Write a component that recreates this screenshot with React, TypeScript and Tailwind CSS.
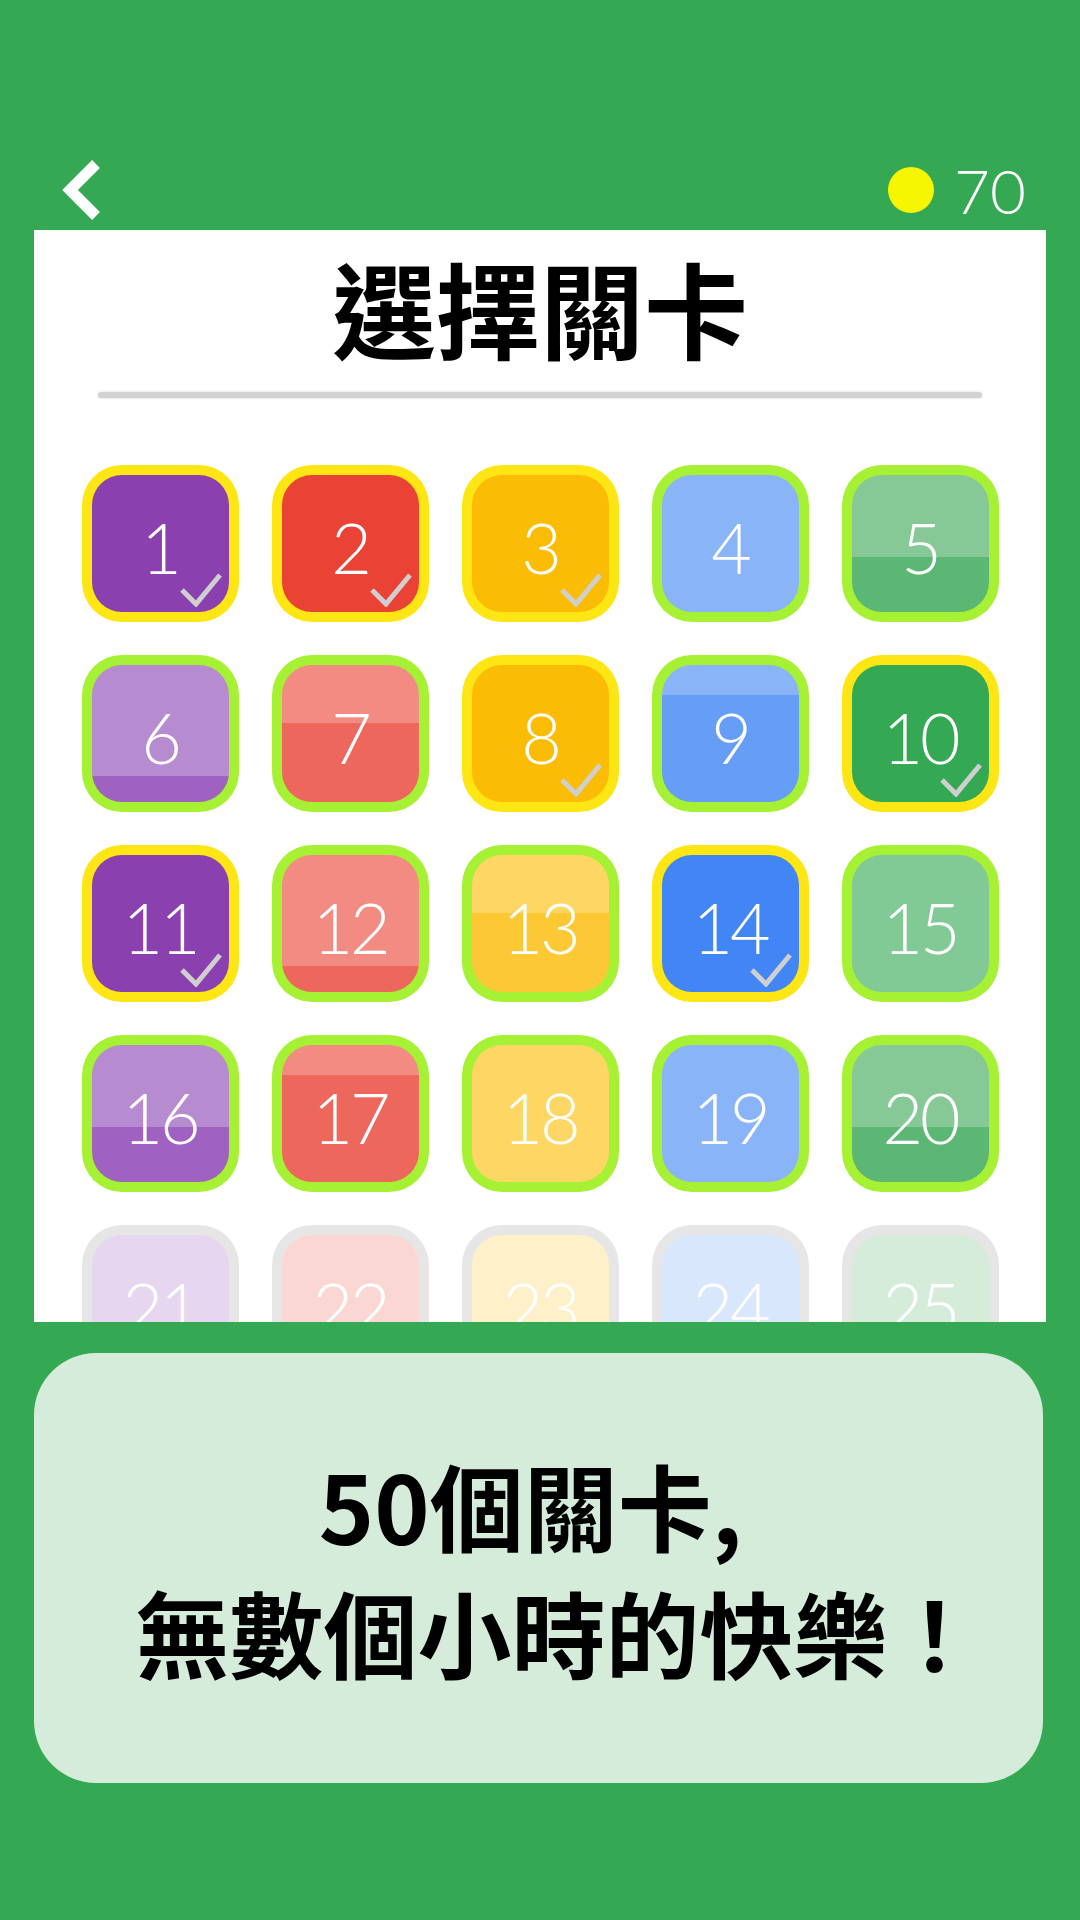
import React from "react";

type Tile = {
  n: number;
  ring: string;
  top: string;
  bottom: string;
  split: string;
  done?: boolean;
};

const YELLOW = "bg-[#fde614]";
const LIME = "bg-[#a6f134]";

const TILES: Tile[] = [
  { n: 1, ring: YELLOW, top: "bg-[#8b40b0]", bottom: "bg-[#8b40b0]", split: "h-[50%]", done: true },
  { n: 2, ring: YELLOW, top: "bg-[#ea4335]", bottom: "bg-[#ea4335]", split: "h-[50%]", done: true },
  { n: 3, ring: YELLOW, top: "bg-[#fbbc05]", bottom: "bg-[#fbbc05]", split: "h-[50%]", done: true },
  { n: 4, ring: LIME, top: "bg-[#8ab4f8]", bottom: "bg-[#8ab4f8]", split: "h-[50%]" },
  { n: 5, ring: LIME, top: "bg-[#86c997]", bottom: "bg-[#5cb774]", split: "h-[60%]" },
  { n: 6, ring: LIME, top: "bg-[#b78bd0]", bottom: "bg-[#9f62c0]", split: "h-[81%]" },
  { n: 7, ring: LIME, top: "bg-[#f28b82]", bottom: "bg-[#ee675c]", split: "h-[42%]" },
  { n: 8, ring: YELLOW, top: "bg-[#fbbc05]", bottom: "bg-[#fbbc05]", split: "h-[50%]", done: true },
  { n: 9, ring: LIME, top: "bg-[#8ab4f8]", bottom: "bg-[#669df6]", split: "h-[22%]" },
  { n: 10, ring: YELLOW, top: "bg-[#34a853]", bottom: "bg-[#34a853]", split: "h-[50%]", done: true },
  { n: 11, ring: YELLOW, top: "bg-[#8b40b0]", bottom: "bg-[#8b40b0]", split: "h-[50%]", done: true },
  { n: 12, ring: LIME, top: "bg-[#f28b82]", bottom: "bg-[#ee675c]", split: "h-[81%]" },
  { n: 13, ring: LIME, top: "bg-[#fdd663]", bottom: "bg-[#fcc934]", split: "h-[42%]" },
  { n: 14, ring: YELLOW, top: "bg-[#4285f4]", bottom: "bg-[#4285f4]", split: "h-[50%]", done: true },
  { n: 15, ring: LIME, top: "bg-[#81c995]", bottom: "bg-[#81c995]", split: "h-[50%]" },
  { n: 16, ring: LIME, top: "bg-[#b78bd0]", bottom: "bg-[#9f62c0]", split: "h-[60%]" },
  { n: 17, ring: LIME, top: "bg-[#f28b82]", bottom: "bg-[#ee675c]", split: "h-[22%]" },
  { n: 18, ring: LIME, top: "bg-[#fdd663]", bottom: "bg-[#fdd663]", split: "h-[50%]" },
  { n: 19, ring: LIME, top: "bg-[#8ab4f8]", bottom: "bg-[#8ab4f8]", split: "h-[50%]" },
  { n: 20, ring: LIME, top: "bg-[#86c997]", bottom: "bg-[#5cb774]", split: "h-[60%]" },
  { n: 21, ring: "bg-[#e6e6e6]", top: "bg-[#e6d6ef]", bottom: "bg-[#e6d6ef]", split: "h-[50%]" },
  { n: 22, ring: "bg-[#e6e6e6]", top: "bg-[#fbd7d4]", bottom: "bg-[#fbd7d4]", split: "h-[50%]" },
  { n: 23, ring: "bg-[#e6e6e6]", top: "bg-[#fef0c9]", bottom: "bg-[#fef0c9]", split: "h-[50%]" },
  { n: 24, ring: "bg-[#e6e6e6]", top: "bg-[#d9e7fd]", bottom: "bg-[#d9e7fd]", split: "h-[50%]" },
  { n: 25, ring: "bg-[#e6e6e6]", top: "bg-[#d6ecda]", bottom: "bg-[#d6ecda]", split: "h-[50%]" },
];

function Check() {
  return (
    <svg
      className="absolute right-[6px] bottom-[5px]"
      width="44"
      height="36"
      viewBox="0 0 44 36"
      fill="none"
    >
      <polyline points="3,19 17,33 41,4" stroke="#cfcfcf" strokeWidth="5" />
    </svg>
  );
}

function LevelTile({ tile }: { tile: Tile }) {
  return (
    <div className={`w-[157px] h-[157px] rounded-[40px] p-[10px] ${tile.ring}`}>
      <div className="relative w-full h-full rounded-[30px] overflow-hidden flex flex-col">
        <div className={`${tile.split} ${tile.top}`} />
        <div className={`flex-1 ${tile.bottom}`} />
        <div className="absolute inset-0 flex items-center justify-center pt-[6px] text-white text-[70px] font-light leading-none tracking-[-3px] font-['Lato',sans-serif]">
          {tile.n}
        </div>
        {tile.done && <Check />}
      </div>
    </div>
  );
}

export default function App() {
  return (
    <div className="w-[1080px] h-[1920px] bg-[#34a853] flex flex-col overflow-hidden">
      <header className="h-[230px] shrink-0 pt-[160px] pl-[62px] pr-[54px] flex items-start justify-between">
        <svg width="40" height="60" viewBox="0 0 40 60" fill="none">
          <polyline points="34,4 8,30 34,56" stroke="white" strokeWidth="11" />
        </svg>
        <div className="h-[60px] flex items-center gap-[20px]">
          <div className="w-[46px] h-[46px] rounded-full bg-[#f6f600]" />
          <span className="text-white text-[62px] font-light leading-none font-['Lato',sans-serif]">
            70
          </span>
        </div>
      </header>

      <section className="mx-[34px] h-[1092px] shrink-0 bg-white overflow-hidden pt-[25px]">
        <h1 className="text-center text-[104px] leading-none font-bold text-black font-['Noto_Sans_CJK_TC','Noto_Sans_CJK_SC',sans-serif]">
          選擇關卡
        </h1>
        <div className="mt-[33px] mx-[64px] h-[6px] rounded-full bg-[#d2d2d2] shadow-[0_0_3px_#d8d8d8]" />
        <div className="mt-[67px] mx-auto grid grid-cols-5 gap-[33px] w-[917px]">
          {TILES.map((t) => (
            <LevelTile key={t.n} tile={t} />
          ))}
        </div>
      </section>

      <div className="mt-[31px] ml-[34px] mr-[37px] h-[430px] shrink-0 rounded-[62px] bg-[#d5ecdb] flex flex-col items-stretch justify-center pl-[40px]">
        <p className="text-center pr-[56px] text-[94px] leading-[127px] font-bold text-black font-['Noto_Sans_CJK_TC','Noto_Sans_CJK_SC',sans-serif]">
          50個關卡,
        </p>
        <p className="text-center text-[94px] leading-[127px] font-bold text-black font-['Noto_Sans_CJK_TC','Noto_Sans_CJK_SC',sans-serif]">
          無數個小時的快樂！
        </p>
      </div>
    </div>
  );
}
